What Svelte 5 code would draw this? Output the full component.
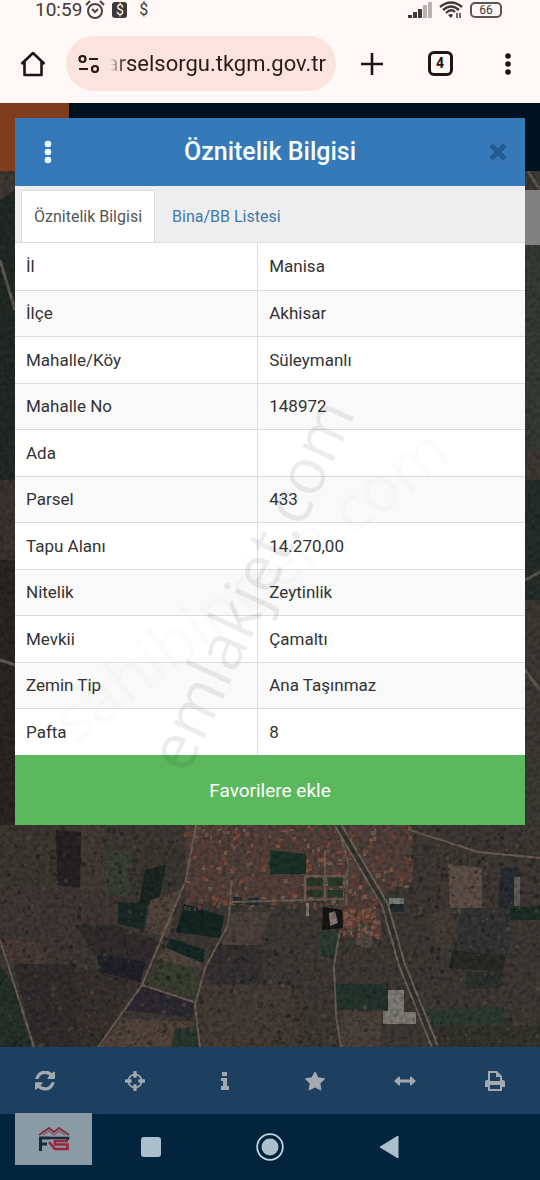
<script lang="ts">
	const rows = [
		['İl', 'Manisa'],
		['İlçe', 'Akhisar'],
		['Mahalle/Köy', 'Süleymanlı'],
		['Mahalle No', '148972'],
		['Ada', ''],
		['Parsel', '433'],
		['Tapu Alanı', '14.270,00'],
		['Nitelik', 'Zeytinlik'],
		['Mevkii', 'Çamaltı'],
		['Zemin Tip', 'Ana Taşınmaz'],
		['Pafta', '8']
	];

	let activeTab = 'info';
	let address = 'arselsorgu.tkgm.gov.tr';

	// small seeded generator so the map looks the same on every load
	let seed = 7;
	function rnd() {
		seed = (seed * 16807) % 2147483647;
		return seed / 2147483647;
	}

	const fields = [
		['0,825 56,825 56,885 0,940', '#3d3832'],
		['56,830 81,832 80,888 57,885', '#252327'],
		['81,825 104,825 104,890 81,890', '#453a34'],
		['104,845 185,845 178,900 118,900', '#3b3932'],
		['105,850 132,852 128,898 104,890', '#3a4035'],
		['0,890 60,888 118,900 115,925 72,962 0,936', '#403734'],
		['145,870 166,865 158,906 139,904', '#1a2724'],
		['118,902 148,903 144,930 118,924', '#1b2c26'],
		['150,900 180,890 168,938 146,930', '#52443c'],
		['75,925 115,925 160,942 148,970 98,960', '#312e2f'],
		['98,955 145,962 141,982 98,972', '#212129'],
		['0,938 50,945 50,964 10,962', '#4a3a35'],
		['14,964 75,964 78,1047 34,1047', '#302e2e'],
		['76,966 138,982 98,1047 76,1047', '#39332f'],
		['0,965 14,985 30,1047 0,1047', '#27302c'],
		['184,904 224,916 220,938 176,932', '#122724'],
		['170,938 205,950 203,963 166,948', '#172925'],
		['166,948 203,963 200,972 156,960', '#52473f'],
		['158,960 200,968 196,1000 146,982', '#3b3f33'],
		['142,984 194,1002 192,1018 126,1010', '#2f2c32'],
		['122,1018 194,1022 196,1047 100,1047', '#52453c'],
		['174,1030 196,1026 198,1047 172,1047', '#2a382e'],
		['230,912 270,912 258,950 222,944', '#4e433e'],
		['212,945 262,945 260,984 204,984', '#343131'],
		['200,985 292,985 298,1047 200,1047', '#453c36'],
		['320,932 340,930 335,956 320,956', '#2d3c32'],
		['335,984 388,984 388,1010 336,1010', '#28342f'],
		['356,912 374,916 372,948 356,946', '#524844'],
		['340,1010 382,1012 380,1047 342,1047', '#4c423b'],
		['432,912 462,912 458,948 434,948', '#443d37'],
		['448,864 482,868 482,908 450,908', '#5e5049'],
		['462,908 510,908 508,958 450,950', '#363534'],
		['500,868 518,868 516,908 498,908', '#2b2f33'],
		['510,908 540,906 540,920 510,920', '#1e2f26'],
		['452,950 506,956 502,972 450,968', '#2a2928'],
		['466,972 502,972 502,988 466,990', '#2e322e'],
		['425,1010 504,1006 506,1024 434,1026', '#2e3b31'],
		['436,1026 540,1026 540,1047 436,1047', '#36342f'],
		['0,200 15,190 15,480 0,480', '#242a27'],
		['0,480 15,480 15,560 0,560', '#3b362e'],
		['0,560 15,560 15,825 0,825', '#2b2825'],
		['525,245 540,245 540,450 525,450', '#393a35'],
		['525,480 540,480 540,600 525,600', '#262f29']
	];

	const roads = [
		'M196 825 L186 880 L142 985 L98 1047',
		'M232 880 L228 925 L205 968 L195 1005 L200 1047',
		'M0 940 L14 984 L34 1047',
		'M338 825 L348 862 L346 905',
		'M340 930 L334 965 L336 1015 L341 1047',
		'M410 830 L478 852 L540 858',
		'M142 985 L194 1002',
		'M232 902 L344 899',
		'M305 876 L305 902 M325 850 L325 902 M305 876 L346 876'
	];

	const roofs = ['#7b4a3c', '#6b4b40', '#8a5a49', '#594239', '#756257', '#3c4439', '#6d3b34'];
	const houses = Array.from({ length: 620 }, () => {
		const t = rnd();
		const y = 826 + t * 110;
		const left = y < 908 ? 184 : 340;
		const right = y < 890 ? 410 : 376;
		return {
			x: Math.round(left + rnd() * (right - left)),
			y: Math.round(y),
			w: 2 + Math.round(rnd() * 3),
			h: 2 + Math.round(rnd() * 3),
			fill: roofs[Math.floor(rnd() * roofs.length)]
		};
	});

	const trees = Array.from({ length: 1500 }, () => ({
		x: Math.round(rnd() * 540),
		y: Math.round(828 + rnd() * 219),
		r: rnd() > 0.7 ? 2 : 1,
		dark: rnd() > 0.3
	})).filter((t) => t.x < 180 || t.x > 410 || t.y > 935);
</script>

<div class="page">
	<header class="phone">
		<div class="status">
			<span class="clock">10:59</span>
			<svg width="20" height="20" viewBox="0 0 20 20" fill="none" stroke="#4a4444" stroke-width="2">
				<circle cx="10" cy="11" r="7" />
				<path d="M1 5 L5 1 M19 5 L15 1 M7 9 L10 12 L13 9" />
			</svg>
			<span class="money boxed">$</span>
			<span class="money">$</span>
			<span class="space"></span>
			<svg width="24" height="16" viewBox="0 0 24 16">
				<path fill="#3f3939" d="M0 13h4v3h-4z M5 10h4v6h-4z M10 7h4v9h-4z" />
				<path fill="#b9b1b1" d="M15 3h4v13h-4z M20 0h4v16h-4z" />
			</svg>
			<svg width="24" height="18" viewBox="0 0 24 18" fill="none" stroke="#3f3939" stroke-width="2.4">
				<path d="M1 6 Q12 -3 23 6 M4 9 Q12 2 20 9 M7 12 Q12 7 16 11" />
				<path d="M9 14 L12 17 L14 14 Q12 12 9 14z" fill="#3f3939" stroke="none" />
				<path d="M18 12v5 M21 12v5" stroke-width="1.5" />
			</svg>
			<span class="battery">66</span>
		</div>
		<div class="browser">
			<button class="plain home" aria-label="Home">
				<svg width="26" height="26" viewBox="0 0 26 26" fill="none" stroke="#1d1514" stroke-width="2.6" stroke-linejoin="round">
					<path d="M1.5 13 L13 2 L24.5 13 M4.5 11 V24 H21.5 V11" />
				</svg>
			</button>
			<div class="pill">
				<svg width="22" height="18" viewBox="0 0 22 18" fill="none" stroke="#2b1a18" stroke-width="2.2">
					<circle cx="4.5" cy="4" r="3" />
					<path d="M11 4 H20 M1 14 H10" />
					<circle cx="17" cy="14" r="3" />
				</svg>
				<input type="text" aria-label="Address" bind:value={address} />
			</div>
			<div class="actions">
				<button class="plain" aria-label="New tab">
					<svg width="22" height="22" viewBox="0 0 22 22" stroke="#1d1514" stroke-width="2.6">
						<path d="M0 11 H22 M11 0 V22" />
					</svg>
				</button>
				<button class="plain" aria-label="Tabs"><span class="count">4</span></button>
				<button class="plain" aria-label="Menu">
					<svg width="6" height="24" viewBox="0 0 6 24" fill="#1d1514">
						<circle cx="3" cy="4" r="2.8" />
						<circle cx="3" cy="12" r="2.8" />
						<circle cx="3" cy="20" r="2.8" />
					</svg>
				</button>
			</div>
		</div>
	</header>

	<main>
		<svg class="map" viewBox="0 103 540 944" preserveAspectRatio="xMidYMax slice" aria-hidden="true">
			<defs>
				<filter id="grain" x="0" y="0" width="100%" height="100%">
					<feTurbulence type="fractalNoise" baseFrequency="0.22" numOctaves="3" seed="4" />
					<feColorMatrix values="0 0 0 0 0  0 0 0 0 0  0 0 0 0 0  2.4 0 0 0 -0.9" />
				</filter>
				<filter id="soft"><feGaussianBlur stdDeviation="0.7" /></filter>
			</defs>
			<rect y="103" width="540" height="944" fill="#3e3934" />
			<g filter="url(#soft)">
				{#each fields as [points, fill]}
					<polygon {points} {fill} />
				{/each}
				<polygon points="186,825 410,825 414,880 378,895 382,940 345,930 340,900 186,902" fill="#52413a" />
				{#each trees as t}
					<circle cx={t.x} cy={t.y} r={t.r} fill={t.dark ? '#1b1d1c' : '#5e534a'} opacity="0.5" />
				{/each}
				{#each houses as h}
					<rect x={h.x} y={h.y} width={h.w} height={h.h} fill={h.fill} opacity="0.8" />
				{/each}
				<path d="M270 850 l36 4 v20 h-36z" fill="#1f3027" />
				<path d="M307 878h16v8h-16z M328 878h15v8h-15z M307 890h16v7h-16z M328 890h15v7h-15z" fill="#2b3a2c" />
				<path d="M233 897h9v7h-9z M248 898h11v7h-11z" fill="#262f31" />
				<path d="M323 907 L342 910 L343 928 L322 930z" fill="#131318" />
				<path d="M329 913l6 -2 3 12 -8 3z" fill="#85756f" />
				<path d="M389 898h15v8h-15z" fill="#777b76" />
				<path d="M390 904h14v8h-14z" fill="#242c2b" />
				<path d="M514 877h6v29h-6z" fill="#605e57" />
				<path d="M306 903h3v13h-3z" fill="#7d7a73" />
				{#each roads as d}
					<path {d} fill="none" stroke="#6a5e54" stroke-width="2" />
				{/each}
				<path d="M338 825 L385 905 L402 965 L435 1047" fill="none" stroke="#6c645a" stroke-width="8" />
				<path d="M338 825 L385 905 L402 965 L435 1047" fill="none" stroke="#35342e" stroke-width="4" />
				<path d="M388 990h16v22h12v12h-33v-13h5z" fill="#7e7b75" />
				<path d="M0 260 L15 310 M0 660 L15 665 M528 171 L540 190 M525 580 L540 572 M525 670 L540 690" stroke="#5d5a53" stroke-width="3" />
			</g>
			<rect y="103" width="540" height="944" filter="url(#grain)" opacity="0.25" />
		</svg>
		<div class="site-bar"></div>
		<div class="side-box"></div>

		<section class="modal">
			<div class="modal-header">
				<button class="plain" aria-label="Options">
					<svg width="8" height="24" viewBox="0 0 8 24" fill="#e9fbff">
						<circle cx="4" cy="4" r="3.3" />
						<circle cx="4" cy="12" r="3.3" />
						<circle cx="4" cy="20" r="3.3" />
					</svg>
				</button>
				<h1>Öznitelik Bilgisi</h1>
				<button class="plain close" aria-label="Close">
					<svg width="18" height="18" viewBox="0 0 18 18" stroke="#255b8e" stroke-width="5">
						<path d="M2 2 L16 16 M16 2 L2 16" />
					</svg>
				</button>
			</div>
			<div class="tabs">
				<button class:active={activeTab === 'info'} on:click={() => (activeTab = 'info')}>Öznitelik Bilgisi</button>
				<button class:active={activeTab === 'list'} on:click={() => (activeTab = 'list')}>Bina/BB Listesi</button>
			</div>
			<table>
				<tbody>
					{#each rows as [label, value]}
						<tr>
							<th scope="row">{label}</th>
							<td>{value}</td>
						</tr>
					{/each}
				</tbody>
			</table>
			<button class="favorite">Favorilere ekle</button>
			<div class="watermark faint">sahibinden.com</div>
			<div class="watermark">emlakjet.com</div>
		</section>
	</main>

	<nav class="tools">
		<button class="plain" aria-label="Refresh">
			<svg width="20" height="20" viewBox="0 32 1536 1536">
				<path d="M1511 928q0 5-1 7-64 268-268 434.5t-478 166.5q-146 0-282.5-55t-243.5-157l-129 129q-19 19-45 19t-45-19-19-45v-448q0-26 19-45t45-19h448q26 0 45 19t19 45-19 45l-137 137q71 66 161 102t187 36q134 0 250-65t186-179q11-17 53-117 8-23 30-23h192q13 0 22.5 9.5t9.5 22.5zm25-800v448q0 26-19 45t-45 19h-448q-26 0-45-19t-19-45 19-45l138-138q-148-137-349-137-134 0-250 65t-186 179q-11 17-53 117-8 23-30 23h-199q-13 0-22.5-9.5t-9.5-22.5v-7q65-268 270-434.5t480-166.5q146 0 284 55.5t245 156.5l130-129q19-19 45-19t45 19 19 45z" />
			</svg>
		</button>
		<button class="plain" aria-label="Locate">
			<svg width="20" height="20" viewBox="0 -128 1536 1536">
				<path d="M1197 768h-109q-26 0-45-19t-19-45v-128q0-26 19-45t45-19h109q-32-108-112.5-188.5t-188.5-112.5v109q0 26-19 45t-45 19h-128q-26 0-45-19t-19-45v-109q-108 32-188.5 112.5t-112.5 188.5h109q26 0 45 19t19 45v128q0 26-19 45t-45 19h-109q32 108 112.5 188.5t188.5 112.5v-109q0-26 19-45t45-19h128q26 0 45 19t19 45v109q108-32 188.5-112.5t112.5-188.5zm339-192v128q0 26-19 45t-45 19h-143q-37 161-154.5 278.5t-278.5 154.5v143q0 26-19 45t-45 19h-128q-26 0-45-19t-19-45v-143q-161-37-278.5-154.5t-154.5-278.5h-143q-26 0-45-19t-19-45v-128q0-26 19-45t45-19h143q37-161 154.5-278.5t278.5-154.5v-143q0-26 19-45t45-19h128q26 0 45 19t19 45v143q161 37 278.5 154.5t154.5 278.5h143q26 0 45 19t19 45z" />
			</svg>
		</button>
		<button class="plain" aria-label="Info">
			<svg width="20" height="20" viewBox="0 0 20 20">
				<path d="M7 1h5v4h-5z M6 7h6v8h2v4h-8v-4h2v-5h-2z" />
			</svg>
		</button>
		<button class="plain" aria-label="Favorites">
			<svg width="20" height="20" viewBox="0 0 1664 1664">
				<path d="M1664 647q0 22-26 48l-363 354 86 500q1 7 1 20 0 21-10.5 35.5t-30.5 14.5q-19 0-40-12l-449-236-449 236q-22 12-40 12-21 0-31.5-14.5t-10.5-35.5q0-6 2-20l86-500-364-354q-25-27-25-48 0-37 56-46l502-73 225-455q19-41 49-41t49 41l225 455 502 73q56 9 56 46z" />
			</svg>
		</button>
		<button class="plain" aria-label="Measure">
			<svg width="22" height="20" viewBox="0 0 22 20">
				<path d="M0 10 L5 5.5 Q6 5.5 6 6 V8.5 H16 V6 Q16 5.5 17 5.5 L22 10 L17 14.5 Q16 14.5 16 14 V11.5 H6 V14 Q6 14.5 5 14.5z" />
			</svg>
		</button>
		<button class="plain" aria-label="Print">
			<svg width="22" height="20" viewBox="0 0 22 20">
				<path fill-rule="evenodd" d="M4 0h9l5 5v4h1q2 0 2 2v5h-3v4h-14v-4h-3v-5q0-2 2-2h1z M6 2v8h10v-4h-4v-4z M6 14v4h10v-4z" />
			</svg>
		</button>
	</nav>

	<footer>
		<button class="plain" aria-label="Recent apps">
			<svg width="20" height="20" viewBox="0 0 20 20" fill="#acbfcc">
				<rect width="20" height="20" rx="3" />
			</svg>
		</button>
		<button class="plain" aria-label="Home screen">
			<svg width="28" height="28" viewBox="0 0 28 28" fill="#acbfcc">
				<circle cx="14" cy="14" r="12.8" fill="none" stroke="#c4d6e2" stroke-width="1.8" />
				<circle cx="14" cy="14" r="8.5" />
			</svg>
		</button>
		<button class="plain" aria-label="Back">
			<svg width="20" height="24" viewBox="0 0 20 24" fill="#acbfcc">
				<path d="M19 1 V23 L1 12z" stroke="#acbfcc" stroke-linejoin="round" />
			</svg>
		</button>
		<div class="logo">
			<svg width="32" height="24" viewBox="0 0 32 24" fill="none">
				<path d="M1 8 L11 1 L16 5 L21 1 L31 8" stroke="#7d2c40" stroke-width="1.8" />
				<path d="M5 8 L11 4 L16 8 L21 4 L27 8" stroke="#8d5361" stroke-width="1.4" />
				<path d="M2.5 24 V11 H12 M2.5 17 H9" stroke="#18293a" stroke-width="3" />
				<path d="M30 13 V11 H12" stroke="#18293a" stroke-width="2.4" />
				<path d="M30 14 H17 V17.5 H29.5 V22 H17 L11 15" stroke="#99263f" stroke-width="2.6" />
			</svg>
		</div>
	</footer>
</div>

<style>
	:global(body) {
		margin: 0;
	}

	.page {
		min-height: 100vh;
		display: flex;
		flex-direction: column;
		font-family: Roboto, sans-serif;
		font-size: 16px;
		color: #333;
	}

	button,
	input {
		font-family: inherit;
	}

	button {
		cursor: pointer;
	}

	svg {
		display: block;
		flex: none;
	}

	.plain {
		display: flex;
		align-items: center;
		justify-content: center;
		padding: 0;
		border: 0;
		background: none;
	}

	.phone {
		background: #fef8f6;
	}

	.status {
		display: flex;
		align-items: center;
		height: 20px;
		padding: 0 38px 0 35px;
		gap: 7px;
		color: #3f3939;
	}

	.clock {
		font-size: 19px;
		line-height: 20px;
		margin-right: -4px;
	}

	.money {
		width: 15px;
		margin-left: 2px;
		font-size: 16px;
		line-height: 16px;
		text-align: center;
	}

	.boxed {
		margin-left: 0;
		border-radius: 3px;
		background: #3f3939;
		color: #fef8f6;
		font-size: 14px;
	}

	.space {
		flex: 1;
	}

	.battery {
		box-sizing: border-box;
		width: 32px;
		border: 2px solid #5b5454;
		border-radius: 5px;
		font-size: 12px;
		line-height: 12px;
		text-align: center;
	}

	.browser {
		display: flex;
		align-items: center;
		padding: 16px 0 12px;
	}

	.home {
		width: 66px;
	}

	.pill {
		flex: 1;
		min-width: 0;
		height: 55px;
		display: flex;
		align-items: center;
		box-sizing: border-box;
		padding: 0 10px 0 12px;
		border-radius: 28px;
		background: #fbe3df;
	}

	.pill input {
		flex: 1;
		min-width: 0;
		height: 40px;
		margin-left: 4px;
		padding: 0;
		border: 0;
		background: none;
		color: #2b1a18;
		font-size: 22px;
		text-align: right;
		mask-image: linear-gradient(to right, transparent 6px, #000 22px);
	}

	.actions {
		display: grid;
		grid-template-columns: repeat(3, 68px);
		padding-left: 2px;
		margin-right: -2px;
	}

	.count {
		box-sizing: border-box;
		width: 25px;
		border: 3px solid #1d1514;
		border-radius: 6px;
		color: #1d1514;
		font-size: 14px;
		font-weight: 700;
		line-height: 19px;
	}

	main {
		flex: 1;
		position: relative;
		padding: 15px;
		background: #37322e;
	}

	.map {
		position: absolute;
		inset: 0;
		width: 100%;
		height: 100%;
	}

	.site-bar {
		position: absolute;
		top: 0;
		left: 0;
		right: 0;
		height: 68px;
		background: linear-gradient(to right, #7f3d1b 69px, #02111f 69px);
	}

	.side-box {
		position: absolute;
		top: 87px;
		right: 0;
		width: 40px;
		height: 55px;
		background: #808080;
	}

	.modal {
		position: relative;
		background: #fff;
	}

	.modal-header {
		display: grid;
		grid-template-columns: 66px 1fr 66px;
		align-items: center;
		height: 68px;
		background: #3579b8;
	}

	.close {
		padding-left: 12px;
	}

	h1 {
		margin: 0;
		color: #f4fdff;
		font-size: 25px;
		font-weight: 500;
		line-height: 32px;
		text-align: center;
	}

	.tabs {
		display: flex;
		box-sizing: border-box;
		height: 57px;
		padding: 4px 6px 0;
		border-bottom: 1px solid #ddd;
		background: #eee;
	}

	.tabs button {
		padding: 0 12px;
		border: 1px solid transparent;
		border-bottom: 0;
		background: none;
		color: #3f7aad;
		font-size: 16px;
	}

	.tabs button + button {
		margin-left: 4px;
	}

	.tabs .active {
		border-color: #ddd;
		background: #fff;
		color: #555;
	}

	table {
		width: 100%;
		border-collapse: collapse;
		table-layout: fixed;
	}

	th,
	td {
		box-sizing: border-box;
		height: 47px;
		padding: 0 11px;
		border-bottom: 1px solid #ddd;
		font-size: 17px;
		font-weight: 400;
		line-height: 24px;
		text-align: left;
	}

	th {
		width: 47.6%;
		border-right: 1px solid #ddd;
	}

	tr:nth-child(even) {
		background: #f9f9f9;
	}

	tr:nth-child(even) > * {
		height: 46px;
	}

	tr:last-child > * {
		border-bottom: 0;
	}

	.favorite {
		display: block;
		width: 100%;
		height: 70px;
		border: 0;
		background: #5cb85c;
		color: #fff;
		font-size: 19px;
	}

	.watermark {
		position: absolute;
		top: 466px;
		left: 46%;
		color: #000;
		opacity: 0.07;
		font-family: "Open Sans", sans-serif;
		font-size: 64px;
		line-height: 80px;
		white-space: nowrap;
		transform: translate(-50%, -50%) rotate(-65deg);
		pointer-events: none;
	}

	.faint {
		opacity: 0.01;
		transform: translate(-50%, -50%) rotate(-37deg);
	}

	.tools {
		display: grid;
		grid-template-columns: repeat(6, 1fr);
		height: 67px;
		background: #1d3f60;
		fill: #a3a9ae;
	}

	footer {
		position: relative;
		display: grid;
		grid-template-columns: repeat(3, 1fr);
		height: 66px;
		padding: 0 17%;
		background: #02253d;
	}

	.logo {
		position: absolute;
		left: 15px;
		bottom: 15px;
		width: 77px;
		height: 52px;
		display: flex;
		align-items: center;
		justify-content: center;
		background: #8a9ba6;
	}
</style>
